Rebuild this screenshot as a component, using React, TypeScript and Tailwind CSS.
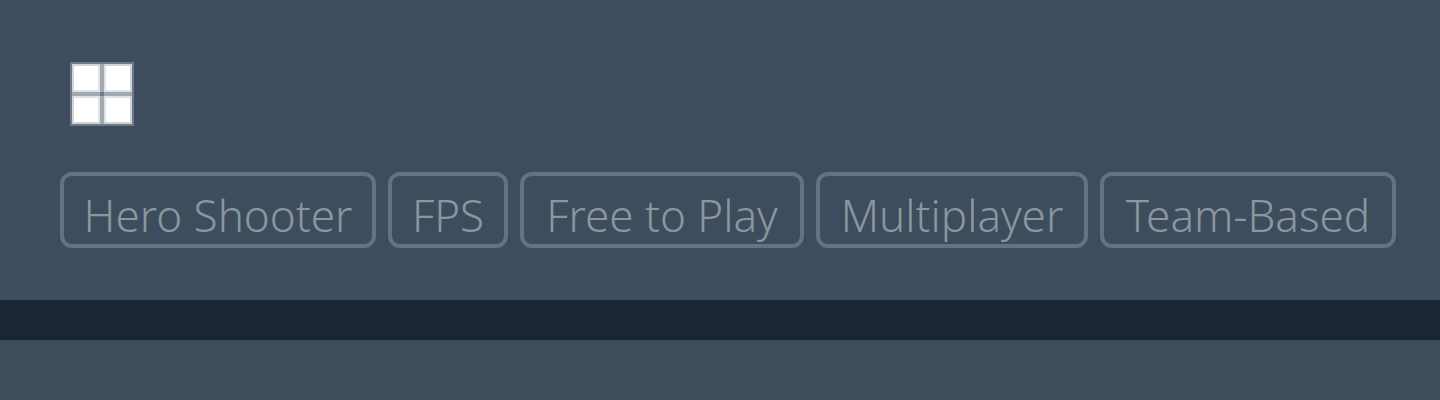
type Tag = { label: string; width: string };

const tags: Tag[] = [
  { label: "Hero Shooter", width: "min-w-[316px]" },
  { label: "FPS", width: "min-w-[120px]" },
  { label: "Free to Play", width: "min-w-[284px]" },
  { label: "Multiplayer", width: "min-w-[272px]" },
  { label: "Team-Based", width: "min-w-[296px]" },
];

function WindowsIcon() {
  return (
    <svg className="size-16" viewBox="0 0 64 64" role="img" aria-label="Windows" shapeRendering="crispEdges">
      <rect width="64" height="64" fill="#6d7987" />
      <rect x="2" y="2" width="60" height="60" fill="#d0d4d9" />
      <path fill="#dfe2e6" d="M28 4h8v56h-8zM4 28h56v8H4z" />
      <path fill="#a0a8b2" d="M30 2h4v60h-4zM2 30h60v4H2z" />
      <path fill="#6d7b8b" d="M30 30h4v4h-4z" />
      <path fill="#ffffff" d="M4 4h24v24H4zM36 4h24v24H36zM4 36h24v24H4zM36 36h24v24H36z" />
    </svg>
  );
}

export default function App() {
  return (
    <div className="min-h-screen overflow-hidden bg-[#3e4d5c] font-['Noto_Sans',sans-serif] font-light">
      <section className="bg-[#3e4d5d] px-[60px] pt-[62px] pb-[52px]">
        <div className="flex pl-[10px]">
          <WindowsIcon />
        </div>
        <ul className="mt-[46px] flex gap-3">
          {tags.map((tag) => (
            <li key={tag.label} className={tag.width}>
              <a
                href="#"
                className="flex h-[76px] items-center justify-center rounded-xl border-4 border-[#65727f] px-[18px] pt-[10px] text-[44px] leading-[60px] whitespace-nowrap text-[#8b969f]"
              >
                {tag.label}
              </a>
            </li>
          ))}
        </ul>
      </section>
      <div className="h-10 bg-linear-to-b from-[#1a2635] via-[#1b2838] to-[#1a2431]" />
      <section className="min-h-[60px] bg-[#3e4d5c]" />
    </div>
  );
}
